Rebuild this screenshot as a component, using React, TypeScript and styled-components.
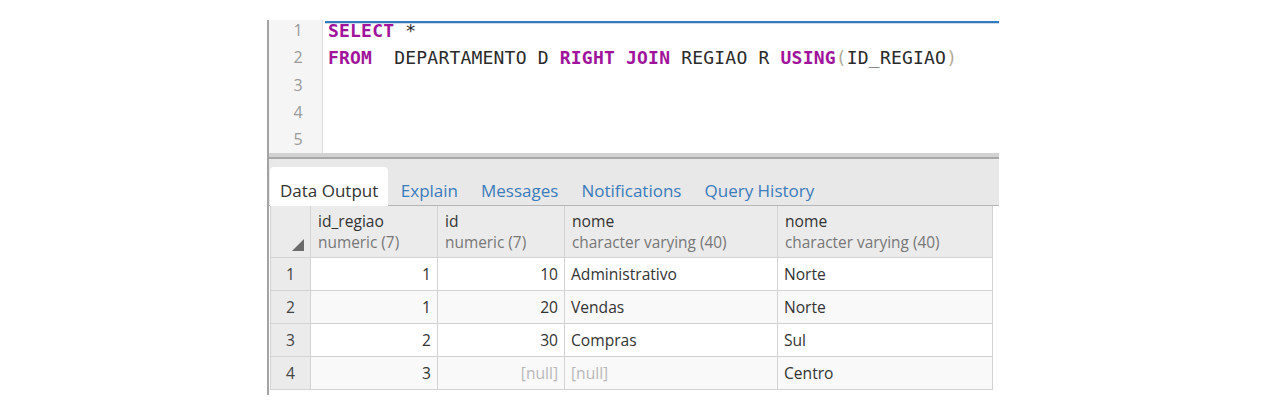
import React from "react";
import styled, { createGlobalStyle } from "styled-components";

const Global = createGlobalStyle`
  html, body { margin: 0; padding: 0; background: #ffffff; }
  body { font-family: "Open Sans", "Liberation Sans", sans-serif; }
`;

const Page = styled.div`
  width: 1266px;
  height: 417px;
  padding: 20px 0 0 267px;
  box-sizing: border-box;
`;

const Frame = styled.div`
  width: 732px;
  height: 375px;
  border-left: 2px solid #a3a3a3;
  box-sizing: border-box;
  display: flex;
  flex-direction: column;
`;

const Editor = styled.div`
  height: 133px;
  display: flex;
  overflow: hidden;
  flex: none;
`;

const Gutter = styled.div`
  width: 54px;
  flex: none;
  background: #f5f5f5;
  border-right: 1px solid #dddddd;
  box-sizing: border-box;
  margin-top: -3px;
`;

const LineNo = styled.div`
  height: 27.25px;
  line-height: 27.25px;
  text-align: center;
  padding-left: 5px;
  font-family: "Open Sans", sans-serif;
  font-size: 16px;
  color: #9a9a9a;
`;

const Code = styled.div`
  flex: 1;
  position: relative;
  padding-left: 5px;
`;

const FocusLine = styled.div`
  position: absolute;
  left: 2px;
  right: 0;
  top: 1px;
  height: 2px;
  background: #2f7dc0;
  border-bottom: 1px solid #cfd8e0;
`;

const CodeLines = styled.div`
  margin-top: -3px;
`;

const CodeLine = styled.div`
  height: 27.25px;
  line-height: 27.25px;
  font-family: "DejaVu Sans Mono", "Liberation Mono", monospace;
  font-size: 18px;
  letter-spacing: 0.2px;
  color: #2a2a2a;
  white-space: pre;
`;

const Kw = styled.span`
  color: #a0139b;
  font-weight: bold;
`;

const Paren = styled.span`
  color: #b3ad98;
`;

const Splitter = styled.div`
  height: 6px;
  background: #d2d2d2;
  border-bottom: 2px solid #a8a8a8;
  box-sizing: border-box;
  flex: none;
`;

const TabBar = styled.div`
  height: 47px;
  background: #e8e8e8;
  border-bottom: 1px solid #b5b5b5;
  box-sizing: border-box;
  display: flex;
  align-items: flex-end;
  padding-left: 1px;
  flex: none;
`;

const Tab = styled.div<{ $active?: boolean }>`
  height: 39px;
  box-sizing: border-box;
  padding: 0 ${(p) => (p.$active ? "10px" : "11.5px")};
  margin-bottom: -1px;
  display: flex;
  align-items: center;
  padding-top: 8px;
  font-family: "Open Sans", sans-serif;
  font-size: 17px;
  color: ${(p) => (p.$active ? "#333333" : "#3a7cbc")};
  background: ${(p) => (p.$active ? "#ffffff" : "transparent")};
  border-radius: 4px 4px 0 0;
  margin-right: ${(p) => (p.$active ? "1px" : "0")};
`;

const Table = styled.table`
  border-collapse: collapse;
  table-layout: fixed;
  width: 723px;
  margin-left: 1px;
  font-family: "Open Sans", sans-serif;
  color: #333333;
`;

const HeadCell = styled.th`
  height: 51px;
  background: #ebebeb;
  border: 1px solid #d3d3d3;
  border-top: none;
  text-align: left;
  font-weight: normal;
  padding: 0 7px;
  vertical-align: middle;
  position: relative;
`;

const ColName = styled.div`
  font-size: 15.6px;
  color: #333333;
  line-height: 22px;
`;

const ColType = styled.div`
  font-size: 15.4px;
  color: #777777;
  line-height: 22px;
`;

const Corner = styled.svg`
  position: absolute;
  right: 6px;
  bottom: 6px;
`;

const RowNum = styled.td`
  height: 32px;
  background: #ebebeb;
  border: 1px solid #d3d3d3;
  text-align: center;
  color: #444444;
  font-size: 15.6px;
  padding: 0;
`;

const Cell = styled.td<{ $num?: boolean; $null?: boolean; $alt?: boolean }>`
  height: 32px;
  border: 1px solid #d3d3d3;
  background: ${(p) => (p.$alt ? "#f9f9f9" : "#ffffff")};
  text-align: ${(p) => (p.$num ? "right" : "left")};
  padding: 0 6px;
  color: ${(p) => (p.$null ? "#b8b8b8" : "#333333")};
  font-size: 15.6px;
  white-space: nowrap;
`;

type Col = { name: string; type: string; w: number; num: boolean };
const cols: Col[] = [
  { name: "id_regiao", type: "numeric (7)", w: 127, num: true },
  { name: "id", type: "numeric (7)", w: 127, num: true },
  { name: "nome", type: "character varying (40)", w: 213, num: false },
  { name: "nome", type: "character varying (40)", w: 215, num: false },
];

const rows: (string | null)[][] = [
  ["1", "10", "Administrativo", "Norte"],
  ["1", "20", "Vendas", "Norte"],
  ["2", "30", "Compras", "Sul"],
  ["3", null, null, "Centro"],
];

const tabs = ["Data Output", "Explain", "Messages", "Notifications", "Query History"];

export default function App() {
  return (
    <Page>
      <Global />
      <Frame>
        <Editor>
          <Gutter>
            {[1, 2, 3, 4, 5].map((n) => (
              <LineNo key={n}>{n}</LineNo>
            ))}
          </Gutter>
          <Code>
            <FocusLine />
            <CodeLines>
              <CodeLine>
                <Kw>SELECT</Kw> *
              </CodeLine>
              <CodeLine>
                <Kw>FROM</Kw>  DEPARTAMENTO D <Kw>RIGHT</Kw> <Kw>JOIN</Kw> REGIAO R <Kw>USING</Kw>
                <Paren>(</Paren>ID_REGIAO<Paren>)</Paren>
              </CodeLine>
              <CodeLine> </CodeLine>
              <CodeLine> </CodeLine>
              <CodeLine> </CodeLine>
            </CodeLines>
          </Code>
        </Editor>
        <Splitter />
        <TabBar>
          {tabs.map((t, i) => (
            <Tab key={t} $active={i === 0}>
              {t}
            </Tab>
          ))}
        </TabBar>
        <Table>
          <colgroup>
            <col style={{ width: 40 }} />
            {cols.map((c, i) => (
              <col key={i} style={{ width: c.w }} />
            ))}
          </colgroup>
          <thead>
            <tr>
              <HeadCell>
                <Corner width="12" height="12" viewBox="0 0 12 12">
                  <polygon points="12,0 12,12 0,12" fill="#6b6b6b" />
                </Corner>
              </HeadCell>
              {cols.map((c, i) => (
                <HeadCell key={i}>
                  <ColName>{c.name}</ColName>
                  <ColType>{c.type}</ColType>
                </HeadCell>
              ))}
            </tr>
          </thead>
          <tbody>
            {rows.map((r, ri) => (
              <tr key={ri}>
                <RowNum>{ri + 1}</RowNum>
                {r.map((v, ci) => (
                  <Cell key={ci} $num={cols[ci].num} $null={v === null} $alt={ri % 2 === 1}>
                    {v === null ? "[null]" : v}
                  </Cell>
                ))}
              </tr>
            ))}
          </tbody>
        </Table>
      </Frame>
    </Page>
  );
}
